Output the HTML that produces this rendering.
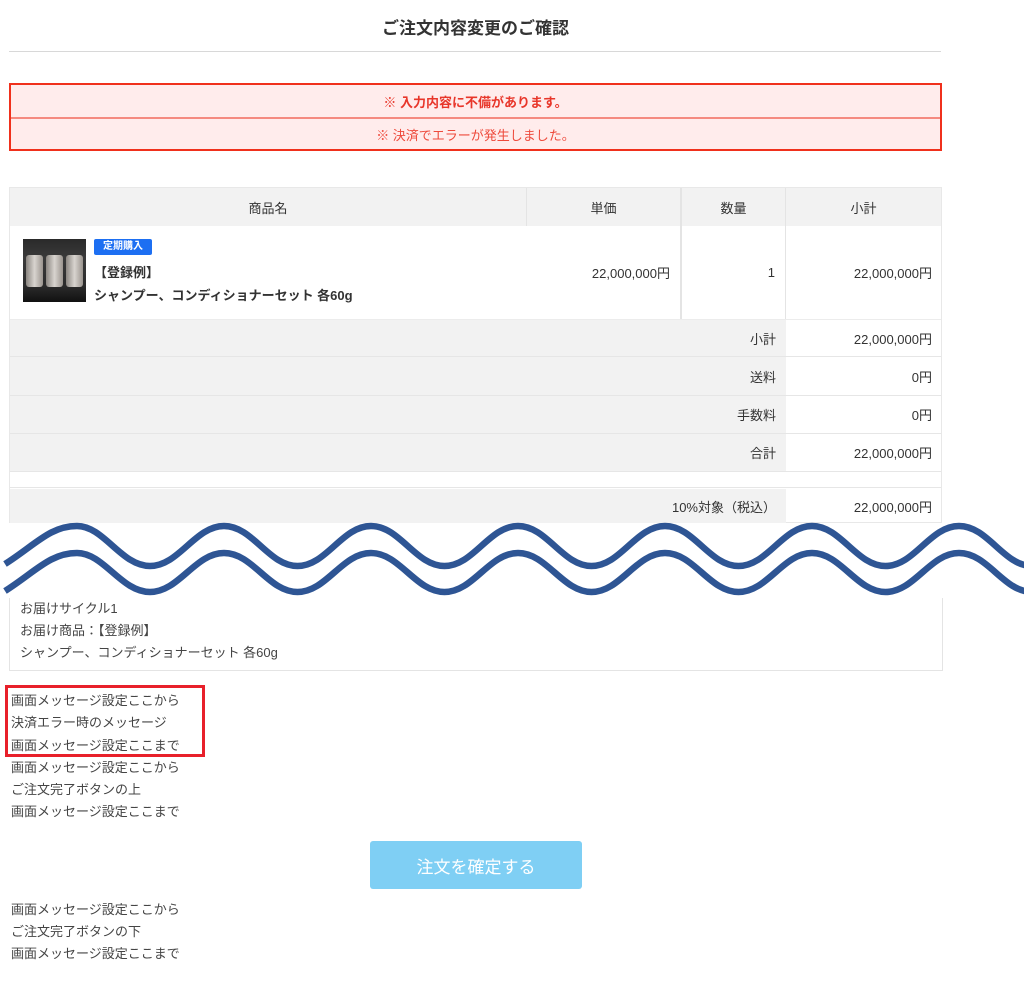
<!DOCTYPE html>
<html><head><meta charset="utf-8"><style>
body{margin:0;width:1024px;height:990px;position:relative;background:#fff;font-family:"Liberation Sans","Noto Sans CJK JP",sans-serif;color:#333;overflow:hidden}
.a{position:absolute}
.c{position:absolute;box-sizing:border-box;font-size:13px;display:flex;align-items:center}
.g{background:#f2f2f2}
.t{font-size:13px;color:#444;position:absolute;left:11px}
</style></head><body>
<div class="a" style="left:0;width:951px;top:14px;text-align:center;font-size:17px;font-weight:bold;color:#333">ご注文内容変更のご確認</div>
<div class="a" style="left:9px;width:932px;top:51px;border-top:1px solid #d8d8d8"></div>
<div class="a" style="left:9px;top:83px;width:933px;height:68px;box-sizing:border-box;border:2px solid #f0301c;background:#ffecec">
 <div style="height:32px;border-bottom:2px solid #f58a80;display:flex;align-items:center;justify-content:center;color:#e8362a;font-size:13px;font-weight:bold">※ 入力内容に不備があります。</div>
 <div style="height:30px;display:flex;align-items:center;justify-content:center;color:#ee4a3c;font-size:13px">※ 決済でエラーが発生しました。</div>
</div>
<div class="a" style="left:9px;top:187px;width:933px;height:336px;border:1px solid #e8e8e8;box-sizing:border-box"></div>
<div class="c g" style="left:10px;top:188px;width:517px;height:38px;justify-content:center;border-right:1px solid #e4e4e4">商品名</div>
<div class="c g" style="left:527px;top:188px;width:155px;height:38px;justify-content:center;border-right:2px solid #e4e4e4">単価</div>
<div class="c g" style="left:682px;top:188px;width:104px;height:38px;justify-content:center;border-right:1px solid #e4e4e4">数量</div>
<div class="c g" style="left:786px;top:188px;width:155px;height:38px;justify-content:center">小計</div>
<div class="a" style="left:10px;top:226px;width:931px;height:93px;border-bottom:1px solid #ececec"></div>
<div class="a" style="left:23px;top:239px;width:63px;height:63px;background:linear-gradient(180deg,#2a2a2a 0%,#3a3a3a 30%,#2b2b2b 75%,#111 100%)">
 <div class="a" style="left:3px;top:16px;width:17px;height:32px;background:linear-gradient(90deg,#8a8580,#d8d4cf,#9a948e);border-radius:3px"></div>
 <div class="a" style="left:23px;top:16px;width:17px;height:32px;background:linear-gradient(90deg,#8a8580,#d8d4cf,#9a948e);border-radius:3px"></div>
 <div class="a" style="left:43px;top:16px;width:17px;height:32px;background:linear-gradient(90deg,#8a8580,#d8d4cf,#9a948e);border-radius:3px"></div>
</div>
<div class="a" style="left:94px;top:239px;width:58px;height:16px;background:#1d6ff2;color:#fff;font-size:10px;font-weight:bold;text-align:center;line-height:16px;border-radius:2px">定期購入</div>
<div class="a" style="left:94px;top:262px;font-size:13px;font-weight:bold;color:#333">【登録例】</div>
<div class="a" style="left:94px;top:285px;font-size:13px;font-weight:bold;color:#333">シャンプー、コンディショナーセット 各60g</div>
<div class="c" style="left:527px;top:226px;width:155px;height:93px;justify-content:flex-end;padding-right:10px;border-right:2px solid #e4e4e4">22,000,000円</div>
<div class="c" style="left:682px;top:226px;width:104px;height:93px;justify-content:flex-end;padding-right:10px;border-right:1px solid #e4e4e4">1</div>
<div class="c" style="left:786px;top:226px;width:155px;height:93px;justify-content:flex-end;padding-right:9px">22,000,000円</div>

<div class="c g" style="left:10px;top:320px;width:776px;height:37px;justify-content:flex-end;padding-right:10px;border-bottom:1px solid #e6e6e6">小計</div>
<div class="c" style="left:786px;top:320px;width:155px;height:37px;justify-content:flex-end;padding-right:9px;border-bottom:1px solid #e6e6e6">22,000,000円</div>
<div class="c g" style="left:10px;top:357px;width:776px;height:39px;justify-content:flex-end;padding-right:10px;border-bottom:1px solid #e6e6e6">送料</div>
<div class="c" style="left:786px;top:357px;width:155px;height:39px;justify-content:flex-end;padding-right:9px;border-bottom:1px solid #e6e6e6">0円</div>
<div class="c g" style="left:10px;top:396px;width:776px;height:38px;justify-content:flex-end;padding-right:10px;border-bottom:1px solid #e6e6e6">手数料</div>
<div class="c" style="left:786px;top:396px;width:155px;height:38px;justify-content:flex-end;padding-right:9px;border-bottom:1px solid #e6e6e6">0円</div>
<div class="c g" style="left:10px;top:434px;width:776px;height:38px;justify-content:flex-end;padding-right:10px;border-bottom:1px solid #e6e6e6">合計</div>
<div class="c" style="left:786px;top:434px;width:155px;height:38px;justify-content:flex-end;padding-right:9px;border-bottom:1px solid #e6e6e6">22,000,000円</div>
<div class="c" style="left:10px;top:472px;width:931px;height:16px;border-bottom:1px solid #e6e6e6"></div>
<div class="c g" style="left:10px;top:489px;width:776px;height:34px;justify-content:flex-end;padding-right:10px">10%対象（税込）</div>
<div class="c" style="left:786px;top:489px;width:155px;height:34px;justify-content:flex-end;padding-right:9px">22,000,000円</div>

<div class="a" style="left:9px;top:598px;width:934px;height:73px;border:1px solid #e4e4e4;border-top:none;box-sizing:border-box"></div>
<div class="a" style="left:0;top:523px;width:1024px;height:75px;background:#fff"></div>
<svg class="a" style="left:0;top:0" width="1024" height="620" viewBox="0 0 1024 620">
<g fill="none" stroke="#2e5594" stroke-width="6.5">
<path d="M5 564 C35 545 50 526 77 526 C104 526 121 566 150 566 C179 566 195 526 224 526 C253 526 268.5 566 297.5 566 C326.5 566 342 526 371 526 C400 526 415.5 566 444.5 566 C473.5 566 489 526 518 526 C547 526 562.5 566 591.5 566 C620.5 566 636 526 665 526 C694 526 709.5 566 738.5 566 C767.5 566 783 526 812 526 C841 526 856.5 566 885.5 566 C914.5 566 930 526 959 526 C988 526 1003.5 566 1032 566"/>
<path d="M5 591 C35 572 50 553 77 553 C104 553 121 592 150 592 C179 592 195 553 224 553 C253 553 268.5 592 297.5 592 C326.5 592 342 553 371 553 C400 553 415.5 592 444.5 592 C473.5 592 489 553 518 553 C547 553 562.5 592 591.5 592 C620.5 592 636 553 665 553 C694 553 709.5 592 738.5 592 C767.5 592 783 553 812 553 C841 553 856.5 592 885.5 592 C914.5 592 930 553 959 553 C988 553 1003.5 592 1032 592"/>
</g></svg>
<div class="t" style="left:20px;top:598px">お届けサイクル1</div>
<div class="t" style="left:20px;top:620px">お届け商品：【登録例】</div>
<div class="t" style="left:20px;top:642px">シャンプー、コンディショナーセット 各60g</div>

<div class="a" style="left:5px;top:685px;width:200px;height:72px;border:3px solid #e8202a;box-sizing:border-box"></div>
<div class="t" style="top:690px">画面メッセージ設定ここから</div>
<div class="t" style="top:712px">決済エラー時のメッセージ</div>
<div class="t" style="top:735px">画面メッセージ設定ここまで</div>
<div class="t" style="top:757px">画面メッセージ設定ここから</div>
<div class="t" style="top:779px">ご注文完了ボタンの上</div>
<div class="t" style="top:801px">画面メッセージ設定ここまで</div>
<div class="a" style="left:370px;top:841px;width:212px;height:48px;background:#7fcff4;border-radius:3px;color:#fff;font-size:17px;display:flex;align-items:center;justify-content:center">注文を確定する</div>
<div class="t" style="top:899px">画面メッセージ設定ここから</div>
<div class="t" style="top:921px">ご注文完了ボタンの下</div>
<div class="t" style="top:943px">画面メッセージ設定ここまで</div>
</body></html>
